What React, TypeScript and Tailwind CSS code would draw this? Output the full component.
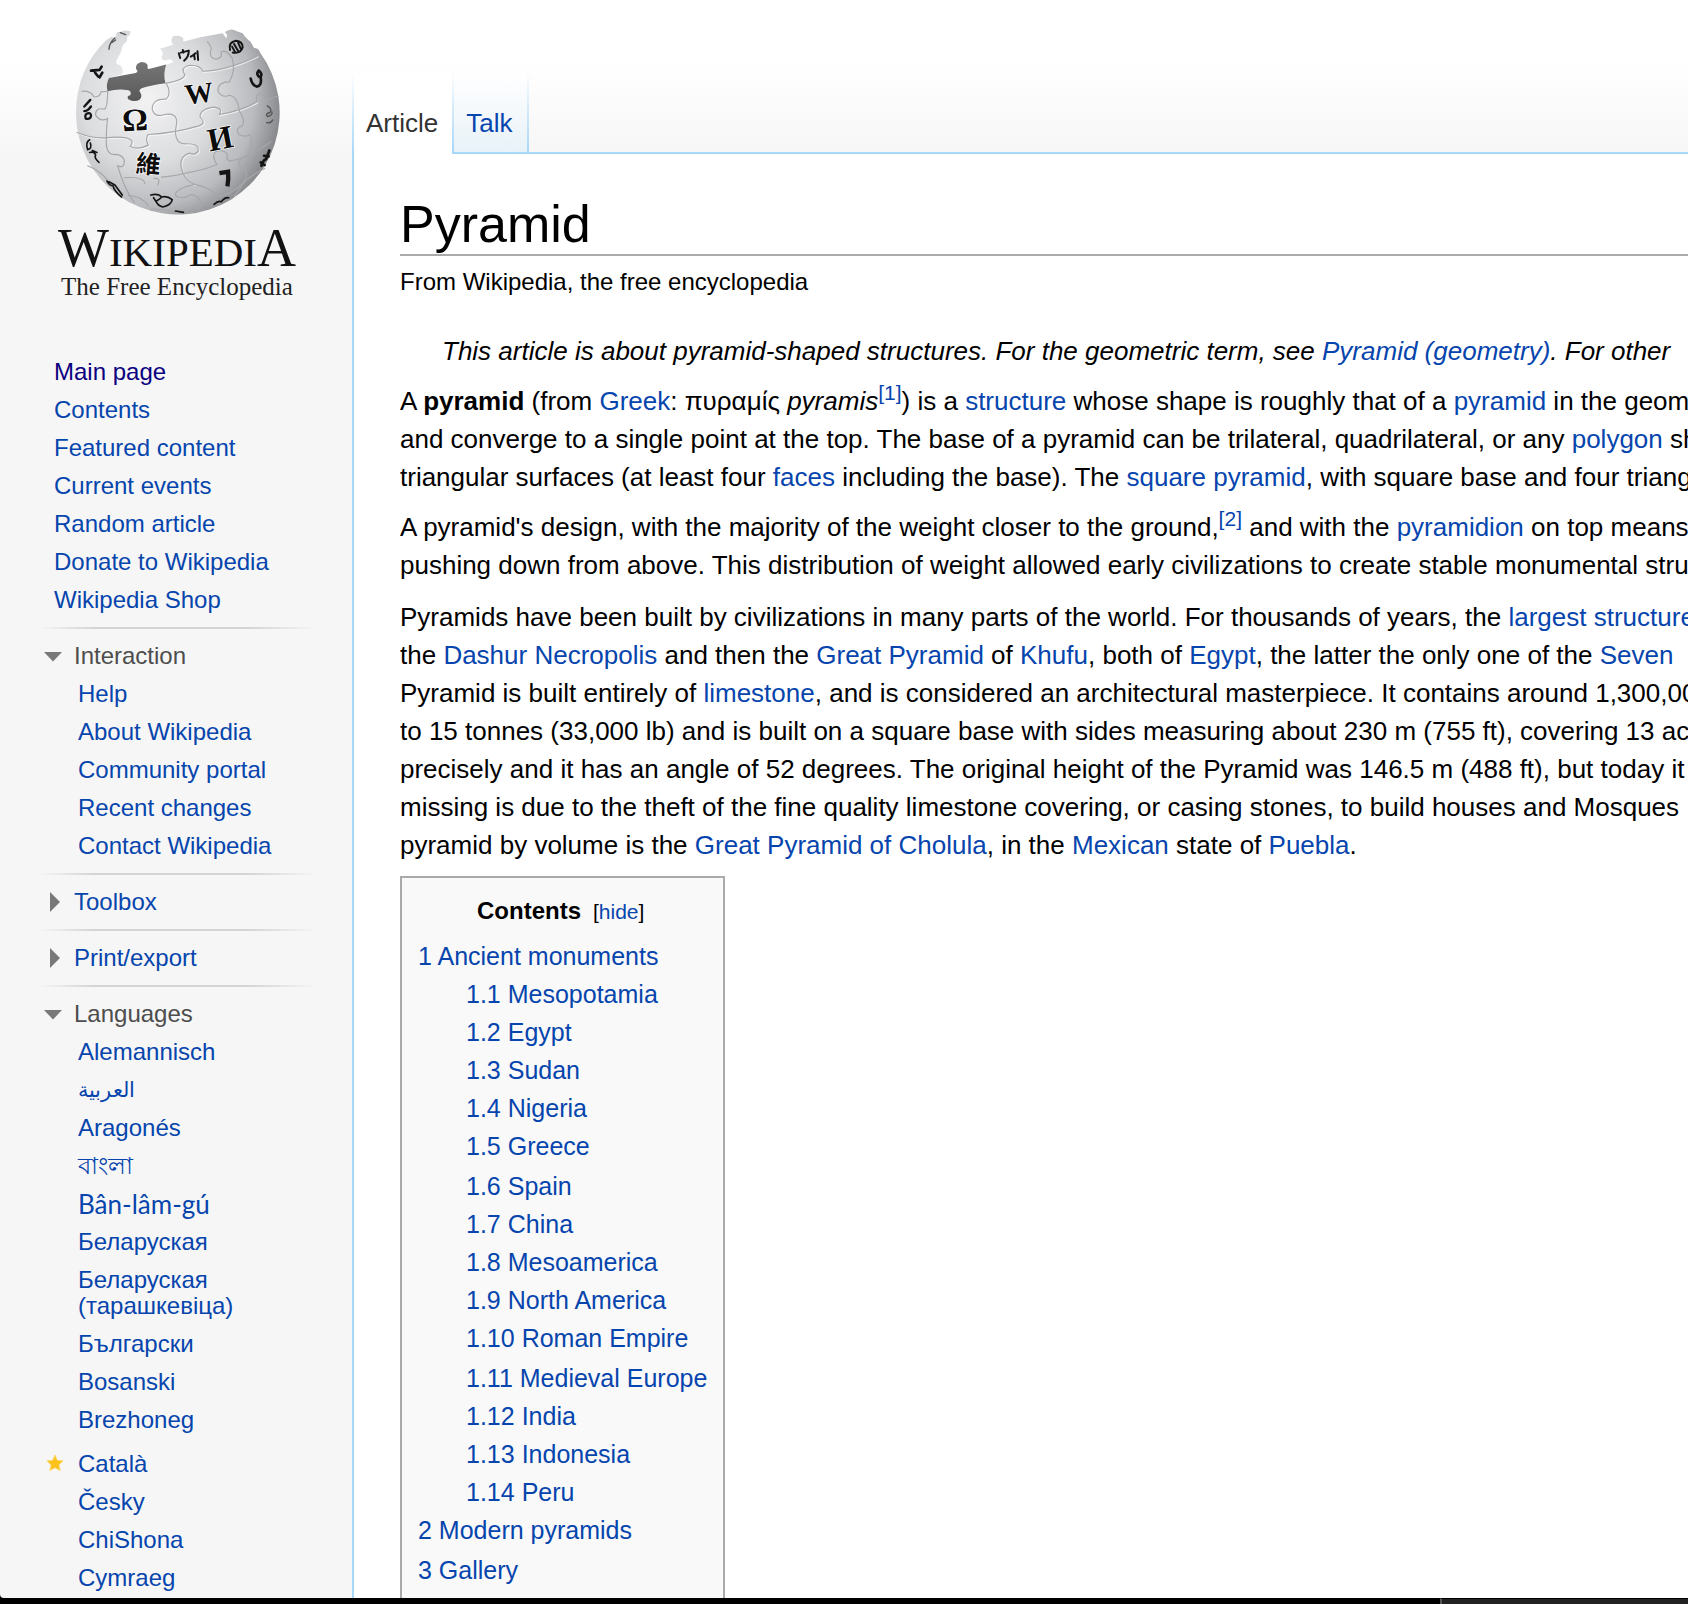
import type { ReactNode } from "react";

const linkColor = "text-[#0645ad]";

function Link({ children, className = "" }: { children: ReactNode; className?: string }) {
  return (
    <a href="#" className={`${linkColor} hover:underline ${className}`}>
      {children}
    </a>
  );
}

function Globe() {
  return (
    <svg viewBox="90 50 640 580" className="h-[193px] w-[213px]" role="img" aria-label="Wikipedia globe">
      <defs>
        <radialGradient id="sphere" gradientUnits="userSpaceOnUse" cx="320" cy="270" r="430">
          <stop offset="0" stopColor="#f2f2f3" />
          <stop offset="0.45" stopColor="#dcdddf" />
          <stop offset="0.75" stopColor="#b9babd" />
          <stop offset="1" stopColor="#77787b" />
        </radialGradient>
        <linearGradient id="hole" x1="0" y1="0" x2="0" y2="1">
          <stop offset="0" stopColor="#777" />
          <stop offset="1" stopColor="#585858" />
        </linearGradient>
      </defs>
      <path
        d="M196 92 L212 82 Q224 88 226 76 Q224 66 238 68 Q250 60 268 66 Q270 78 258 82 Q262 98 246 106 L240 128 L226 156 Q224 166 238 168 Q250 180 242 196 L204 206 L200 246 L370 224 L372 168 L398 158 Q392 146 374 154 Q356 150 364 138 Q370 128 357 118 L396 106 Q386 90 398 80 Q420 76 428 88 Q424 98 432 96 Q490 80 545 72 L556 86 Q564 78 552 68 Q572 54 588 66 L606 72 Q612 84 630 98 L640 116 Q654 116 658 130 A306 306 0 1 1 105 311 Q106 180 196 92 Z"
        fill="url(#sphere)"
      />
      <path
        d="M204 206 L284 191 Q294 188 286 180 Q282 162 302 158 Q324 160 320 174 Q318 182 330 178 L376 166 Q366 196 374 222 Q330 228 302 237 Q292 242 298 250 Q306 262 296 272 Q280 280 262 270 Q256 260 268 258 Q274 244 258 242 Q230 238 200 246 Q194 226 204 206 Z"
        fill="url(#hole)"
      />
      <g fill="none" strokeLinecap="round">
        <g stroke="#fff" strokeWidth="4" opacity="0.65" transform="translate(3 3)">
          <path d="M376 222 Q394 252 376 270 Q334 268 334 300 Q340 326 372 316 Q408 310 408 340 L404 364 Q404 404 432 404 Q476 402 472 426 Q464 440 446 432 Q418 440 420 470 Q432 520 462 526" />
          <path d="M108 370 Q150 388 192 386 Q250 380 266 390 Q280 396 268 412 Q292 424 322 408 Q312 388 322 376 Q400 372 474 350 Q498 342 478 324 Q476 300 520 294 Q548 298 536 316 Q600 306 648 278" />
          <path d="M376 222 Q430 212 432 196 Q416 174 448 168 Q480 168 486 186 Q560 184 650 140" />
        </g>
        <g stroke="#a6a7aa" strokeWidth="3.5">
          <path d="M376 222 Q394 252 376 270 Q334 268 334 300 Q340 326 372 316 Q408 310 408 340 L404 364 Q404 404 432 404 Q476 402 472 426 Q464 440 446 432 Q418 440 420 470 Q432 520 462 526 Q400 540 404 560 Q430 574 450 556 Q480 560 480 592 L470 606" />
          <path d="M108 370 Q150 388 192 386 Q250 380 266 390 Q280 396 268 412 Q292 424 322 408 Q312 388 322 376 Q400 372 474 350 Q498 342 478 324 Q476 300 520 294 Q548 298 536 316 Q600 306 648 278 Q644 254 660 252 Q680 262 676 276 Q700 260 712 262" />
          <path d="M376 222 Q430 212 432 196 Q416 174 448 168 Q480 168 486 186 Q560 184 650 140" />
          <path d="M200 246 Q200 296 190 300 Q162 294 164 318 Q178 340 200 328 Q196 350 196 400 Q196 440 226 436 Q252 440 250 462 Q246 478 230 470 Q250 540 280 580" />
          <path d="M122 246 Q150 244 158 262 Q176 266 180 248 L200 246" />
          <path d="M500 98 Q516 116 510 124 Q504 146 526 150 Q548 144 540 130 Q552 116 574 146 Q586 180 566 218 Q530 218 532 246 Q544 268 566 258 Q590 260 596 306" />
          <path d="M596 306 Q616 336 604 350 Q582 356 594 376 Q616 386 628 376 Q640 410 618 440 Q590 450 596 470 Q618 482 618 500 Q600 540 580 562" />
          <path d="M250 506 Q310 502 312 524 M340 508 Q362 506 350 528 M362 504 Q410 500 424 494 Q500 480 528 466 Q512 440 524 428 Q548 418 560 436 Q556 452 566 456 Q630 446 690 398" />
          <path d="M462 526 Q520 540 528 562 Q570 560 618 512 Q650 488 672 478" />
          <path d="M140 470 Q180 486 200 514 M262 560 Q300 560 322 590 M330 600 Q390 602 404 612" />
        </g>
      </g>
      <g fill="#0c0c0c" stroke="#fff" strokeWidth="4" paintOrder="stroke" fontFamily="Liberation Serif, serif" textAnchor="middle">
        <text x="284" y="364" fontSize="96" fontWeight="700" transform="rotate(-3 284 364)">Ω</text>
        <text x="478" y="281" fontSize="86" fontWeight="700" transform="rotate(-7 478 281)">W</text>
        <text x="544" y="420" fontSize="98" transform="rotate(-11 544 420)" fontWeight="700">И</text>
        <text x="320" y="492" fontSize="74" fontWeight="700" fontFamily="Noto Sans CJK TC, sans-serif" transform="rotate(5 320 492)">維</text>
      </g>
      <g fill="none" stroke="#151515" strokeWidth="8" strokeLinecap="round" strokeLinejoin="round">
        <path d="M536 492 L562 488 Q564 510 560 532" strokeWidth="13" strokeLinecap="butt" strokeLinejoin="miter" />
        <path d="M414 132 L418 146 M426 122 L428 130 M420 130 L444 124 Q444 144 430 154 M464 132 Q458 138 450 142 M460 138 L462 150 M470 126 L472 152" strokeWidth="6" />
        <path d="M568 122 Q562 98 586 94 Q606 96 606 114 Q600 134 576 130 M580 104 L594 128 M592 100 L600 118 M574 112 L584 130" strokeWidth="6" />
        <path d="M654 184 Q644 196 658 204 Q668 196 654 184 M660 204 Q664 230 648 232 Q634 228 630 208" />
        <path d="M182 172 L176 182 L150 184 M160 184 Q162 192 172 202 M184 190 L176 204" strokeWidth="8" />
        <path d="M222 86 Q206 98 204 120 M212 100 L224 92 M238 70 L254 76" strokeWidth="4" stroke="#555" />
        <path d="M148 272 L130 292 M150 292 Q140 306 130 306 M142 312 Q130 314 134 328 Q150 332 150 318 Q148 310 142 312" strokeWidth="7" />
        <path d="M146 392 Q132 400 140 422 Q154 418 148 402 M146 430 Q160 426 164 438 Q158 446 174 460 M154 424 L168 430" strokeWidth="5" />
        <path d="M198 516 Q206 530 216 530 Q220 546 242 564 M204 518 L222 528 L244 558" strokeWidth="5" />
        <path d="M330 558 Q352 552 362 564 Q380 560 394 572 Q392 588 366 594 Q348 588 346 576 Q360 568 362 564 M338 566 L350 584" strokeWidth="5" />
        <path d="M404 606 L428 610 M520 586 Q532 574 542 578 Q552 564 564 566" strokeWidth="5" />
        <path d="M662 470 Q668 452 676 450 Q682 436 686 424 M670 440 L684 442 M660 460 L672 468" strokeWidth="8" />
        <path d="M680 290 Q696 300 688 310 Q672 314 680 322 Q696 320 694 308 M678 340 Q690 344 696 332" strokeWidth="4" stroke="#555" />
      </g>
    </svg>
  );
}

function Logo() {
  return (
    <a href="#" className="flex flex-col items-center pl-[2px] pt-[26px] font-['Liberation_Serif',serif] text-[#111]">
      <Globe />
      <span className="mt-[4px] whitespace-nowrap text-[54px] leading-[50px]">
        W<span className="text-[41px]">IKIPEDI</span>A
      </span>
      <span className="whitespace-nowrap text-[25px] leading-[20px] text-[#222]">The Free Encyclopedia</span>
    </a>
  );
}

function Arrow({ open }: { open: boolean }) {
  return (
    <svg viewBox="0 0 20 20" className="size-[20px] shrink-0" aria-hidden="true">
      <path d={open ? "M1 6 H19 L10 15.5 Z" : "M7 0 L17 10 L7 20 Z"} fill="#797979" />
    </svg>
  );
}

function Divider() {
  return (
    <div className="ml-[38px] h-[2px] w-[280px] bg-[linear-gradient(to_right,transparent,#d4d4d4_20%,#d4d4d4_75%,transparent)]" />
  );
}

function Portal({ title, open = false, children }: { title: string; open?: boolean; children?: ReactNode }) {
  return (
    <section>
      <Divider />
      <h3 className={open ? "pb-[6px] pt-[14px]" : "py-[14px]"}>
        <button
          type="button"
          aria-expanded={open}
          className={`flex items-center gap-[11px] pl-[43px] leading-[26px] ${open ? "text-[#4d4d4d]" : linkColor}`}
        >
          <Arrow open={open} />
          {title}
        </button>
      </h3>
      {children}
    </section>
  );
}

type Item = { label: string; visited?: boolean; star?: boolean; font?: string };

function NavList({ items, indent }: { items: Item[]; indent: string }) {
  return (
    <ul className={`${indent} pr-[40px]`}>
      {items.map((item) => (
        <li key={item.label} className={`relative py-[6px] leading-[26px] ${item.star ? "mt-[6px]" : ""} ${item.font ?? ""}`}>
          {item.star && (
            <svg viewBox="0 0 20 20" className="absolute -left-[32px] top-[9px] size-[18px]" aria-hidden="true">
              <path d="M10 1 L12.6 7 L19 7.6 L14.4 12 L15.8 18.5 L10 15.2 L4.2 18.5 L5.6 12 L1 7.6 L7.4 7 Z" fill="#fcc21c" stroke="#fbd976" />
            </svg>
          )}
          <a href="#" className={`block hover:underline ${item.visited ? "text-[#0b0080]" : linkColor}`}>
            {item.label}
          </a>
        </li>
      ))}
    </ul>
  );
}

const mainLinks: Item[] = [
  { label: "Main page", visited: true },
  { label: "Contents" },
  { label: "Featured content" },
  { label: "Current events" },
  { label: "Random article" },
  { label: "Donate to Wikipedia" },
  { label: "Wikipedia Shop" },
];

const interactionLinks: Item[] = [
  { label: "Help" },
  { label: "About Wikipedia" },
  { label: "Community portal" },
  { label: "Recent changes" },
  { label: "Contact Wikipedia" },
];

const languageLinks: Item[] = [
  { label: "Alemannisch" },
  { label: "العربية", font: "text-[21px]" },
  { label: "Aragonés" },
  { label: "বাংলা" },
  { label: "Bân-lâm-gú", font: "font-['Lato',sans-serif] text-[26px]" },
  { label: "Беларуская" },
  { label: "Беларуская (тарашкевіца)" },
  { label: "Български" },
  { label: "Bosanski" },
  { label: "Brezhoneg" },
  { label: "Català", star: true },
  { label: "Česky" },
  { label: "ChiShona" },
  { label: "Cymraeg" },
];

const ancient = [
  "Mesopotamia",
  "Egypt",
  "Sudan",
  "Nigeria",
  "Greece",
  "Spain",
  "China",
  "Mesoamerica",
  "North America",
  "Roman Empire",
  "Medieval Europe",
  "India",
  "Indonesia",
  "Peru",
];

function Sidebar() {
  return (
    <aside className="w-[352px] shrink-0 text-[24px]">
      <Logo />
      <nav aria-label="Navigation" className="pb-[8px] pt-[56px]">
        <NavList items={mainLinks} indent="pl-[54px]" />
      </nav>
      <nav aria-label="Tools">
        <Portal title="Interaction" open>
          <NavList items={interactionLinks} indent="pl-[78px]" />
          <div className="h-[8px]" />
        </Portal>
        <Portal title="Toolbox" />
        <Portal title="Print/export" />
        <Portal title="Languages" open>
          <NavList items={languageLinks} indent="pl-[78px]" />
        </Portal>
      </nav>
    </aside>
  );
}

const fade = "w-[2px] bg-linear-to-b from-transparent to-[#a7d7f9]";

function Tabs() {
  return (
    <div className="flex h-[154px] shrink-0 items-end">
      <div className="flex h-[80px] bg-white">
        <div className={fade} />
        <a href="#" className="pl-[12px] pr-[14px] pt-[32px] text-[26px] leading-[34px] text-[#333]">
          Article
        </a>
      </div>
      <div className="flex h-[80px] flex-1 border-b-2 border-[#a7d7f9]">
        <div className={fade} />
        <a
          href="#"
          className="bg-linear-to-b from-white to-[#e8f2f8] pl-[12px] pr-[14px] pt-[32px] text-[26px] leading-[34px] text-[#0645ad]"
        >
          Talk
        </a>
        <div className={fade} />
      </div>
    </div>
  );
}

function Ref({ n }: { n: number }) {
  return (
    <sup className="top-0 align-[10px] text-[21px] leading-[0]">
      <Link>[{n}]</Link>
    </sup>
  );
}

function Contents() {
  return (
    <nav aria-label="Contents" className="mt-[12px] w-fit border-2 border-[#aaa] bg-[#f9f9f9] px-[16px] pb-[60px] pt-[14px] text-[25px] leading-[38px]">
      <div className="flex items-baseline justify-center gap-[12px] pb-[6px] pr-[4px]">
        <h2 className="text-[24px] font-bold">Contents</h2>
        <span className="text-[21px]">
          [<button type="button" className="text-[#0645ad]">hide</button>]
        </span>
      </div>
      <ol>
        <li>
          <Link>1 Ancient monuments</Link>
          <ol className="pl-[48px]">
            {ancient.map((title, i) => (
              <li key={title} className="nth-[5n]:mb-[2px]">
                <Link>
                  1.{i + 1} {title}
                </Link>
              </li>
            ))}
          </ol>
        </li>
        <li className="mb-[2px]">
          <Link>2 Modern pyramids</Link>
        </li>
        <li>
          <Link>3 Gallery</Link>
        </li>
      </ol>
    </nav>
  );
}

function Article() {
  return (
    <main className="flex-1 border-l-2 border-[#a7d7f9] bg-white pl-[46px] text-black">
      <h1 className="border-b-2 border-[#aaa] pt-[40px] text-[52px] leading-[60px]">Pyramid</h1>
      <p className="pt-[10px] text-[24px] leading-[32px]">From Wikipedia, the free encyclopedia</p>
      <div className="whitespace-nowrap text-[26px] leading-[38px]">
        <p className="pl-[42px] pt-[34px] italic">
          This article is about pyramid-shaped structures. For the geometric term, see <Link>Pyramid (geometry)</Link>. For other
        </p>
        <p className="pt-[12px]">
          A <b>pyramid</b> (from <Link>Greek</Link>: πυραμίς <i>pyramis</i>
          <Ref n={1} />) is a <Link>structure</Link> whose shape is roughly that of a <Link>pyramid</Link> in the geometric
          <br />
          and converge to a single point at the top. The base of a pyramid can be trilateral, quadrilateral, or any{" "}
          <Link>polygon</Link> shape
          <br />
          triangular surfaces (at least four <Link>faces</Link> including the base). The <Link>square pyramid</Link>, with square
          base and four triangular
        </p>
        <p className="pt-[12px]">
          A pyramid's design, with the majority of the weight closer to the ground,
          <Ref n={2} /> and with the <Link>pyramidion</Link> on top means
          <br />
          pushing down from above. This distribution of weight allowed early civilizations to create stable monumental structures
        </p>
        <p className="pt-[14px]">
          Pyramids have been built by civilizations in many parts of the world. For thousands of years, the{" "}
          <Link>largest structures</Link>
          <br />
          the <Link>Dashur Necropolis</Link> and then the <Link>Great Pyramid</Link> of <Link>Khufu</Link>, both of{" "}
          <Link>Egypt</Link>, the latter the only one of the <Link>Seven</Link>
          <br />
          Pyramid is built entirely of <Link>limestone</Link>, and is considered an architectural masterpiece. It contains around
          1,300,000
          <br />
          to 15 tonnes (33,000 lb) and is built on a square base with sides measuring about 230 m (755 ft), covering 13 acres
          <br />
          precisely and it has an angle of 52 degrees. The original height of the Pyramid was 146.5 m (488 ft), but today it
          <br />
          missing is due to the theft of the fine quality limestone covering, or casing stones, to build houses and Mosques
          <br />
          pyramid by volume is the <Link>Great Pyramid of Cholula</Link>, in the <Link>Mexican</Link> state of <Link>Puebla</Link>.
        </p>
      </div>
      <Contents />
    </main>
  );
}

export default function App() {
  return (
    <div className="flex h-screen flex-col overflow-hidden bg-black font-['Liberation_Sans','Noto_Sans',sans-serif]">
      <div className="flex min-h-0 flex-1 overflow-hidden rounded-bl-[4px] bg-[#f6f6f6] bg-[linear-gradient(to_bottom,#fff_60px,#f6f6f6_160px)]">
        <Sidebar />
        <div className="flex min-w-0 flex-1 flex-col overflow-hidden">
          <Tabs />
          <Article />
        </div>
      </div>
      <div className="flex h-[6px] shrink-0 justify-end">
        <div className="w-[248px] border-l-2 border-t border-l-[#555] border-t-black bg-[#222]" />
      </div>
    </div>
  );
}
